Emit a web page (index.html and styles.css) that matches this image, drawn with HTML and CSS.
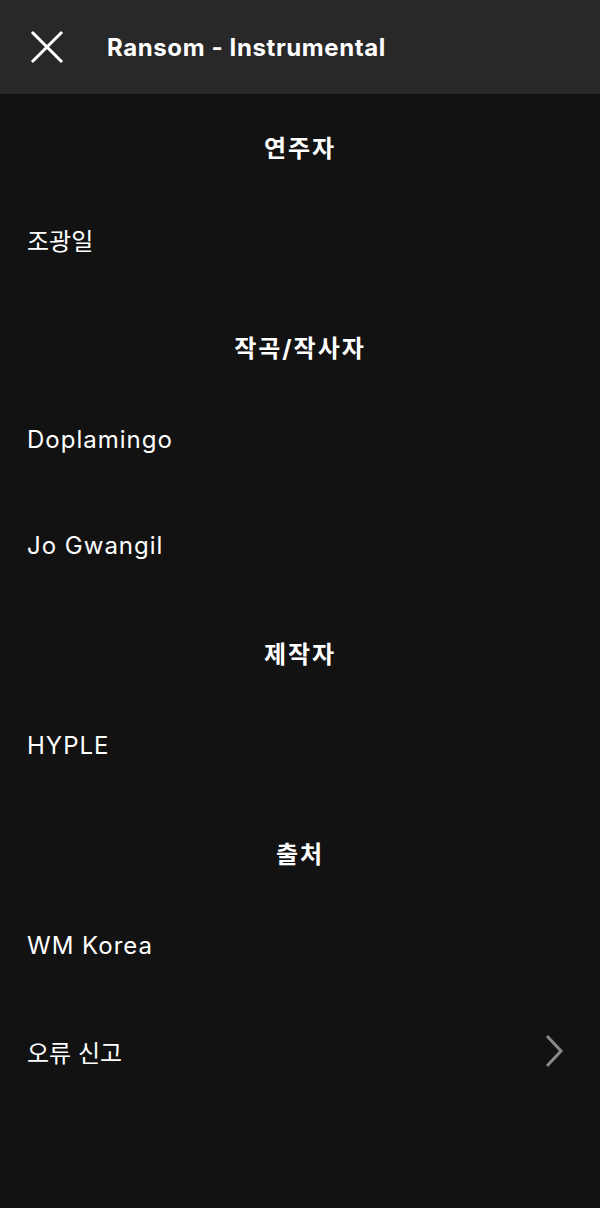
FILE: index.html
```html
<!DOCTYPE html>
<html lang="ko">
<head>
<meta charset="utf-8">
<link rel="stylesheet" href="styles.css">
</head>
<body>
<header class="topbar">
  <svg class="close" width="34" height="34" viewBox="0 0 34 34"><path d="M3 3 L31 31 M31 3 L3 31" stroke="#fff" stroke-width="3" stroke-linecap="square" fill="none"/></svg>
  <h1 class="title">Ransom - Instrumental</h1>
</header>
<main class="credits">
  <h2 class="section">연주자</h2>
  <div class="row ko">조광일</div>
  <h2 class="section">작곡/작사자</h2>
  <div class="row">Doplamingo</div>
  <div class="row">Jo Gwangil</div>
  <h2 class="section">제작자</h2>
  <div class="row">HYPLE</div>
  <h2 class="section">출처</h2>
  <div class="row">WM Korea</div>
  <div class="row ko report"><span>오류 신고</span>
    <svg class="chev" width="20" height="34" viewBox="0 0 20 34"><path d="M3 2 L17 17 L3 32" stroke="#8a8a8a" stroke-width="3" fill="none"/></svg>
  </div>
</main>
</body>
</html>
```
FILE: styles.css
```css
html, body {
  margin: 0;
  padding: 0;
  background: #121212;
  height: 100%;
}
body {
  font-family: "Inter", "Noto Sans CJK KR", sans-serif;
  color: #fff;
}
.topbar {
  height: 94px;
  background: #282828;
  display: flex;
  align-items: center;
  padding-left: 30px;
  box-sizing: border-box;
}
.close {
  display: block;
  flex: none;
}
.title {
  margin: 0 0 0 43px;
  font-size: 24px;
  font-weight: 700;
  letter-spacing: 0.6px;
}
.credits {
  display: flex;
  flex-direction: column;
}
.section {
  margin: 0;
  height: 94px;
  box-sizing: border-box;
  padding-top: 41px;
  line-height: 28px;
  font-size: 24px;
  font-weight: 700;
  text-align: center;
  letter-spacing: 2px;
}
.row {
  height: 106px;
  display: flex;
  align-items: center;
  padding: 0 36px 4px 27px;
  box-sizing: border-box;
  font-size: 24px;
  letter-spacing: 1px;
}
.row.ko {
  letter-spacing: 0;
}
.report {
  justify-content: space-between;
}
.chev {
  display: block;
}
```
